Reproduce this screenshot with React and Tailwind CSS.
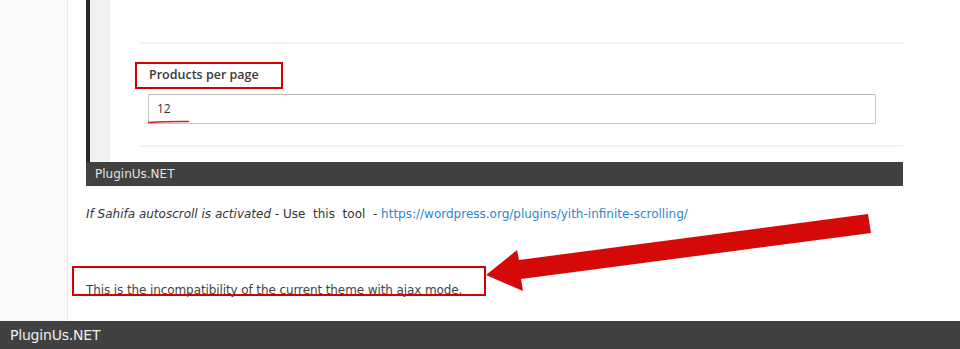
import React from 'react';

const body = { fontFamily: '"DejaVu Sans", Verdana, sans-serif' };

function Arrow() {
    return (
        <svg className="absolute left-0 top-0 pointer-events-none" width="960" height="349" viewBox="0 0 960 349">
            <polygon
                points="486,275 517,250 519,260 868,214 871,233 521,279 523,291"
                fill="#d60909"
            />
        </svg>
    );
}

function InnerShot() {
    return (
        <div className="ml-[18px] w-[817px] flex flex-col">
            <div className="flex h-[162px]">
                <div className="w-[4px] bg-[#23282d]" />
                <div className="w-[20px] bg-[#f1f1f1]" />
                <div className="flex-1 bg-white relative">
                    <div className="ml-[29px] mt-[42px] h-[2px] bg-[#f1f3f3]" />
                    <div className="ml-[25px] mt-[18px] w-[148px] h-[27px] border-2 border-[#d40000] flex items-center pl-[12px]">
                        <span className="text-[12.5px] font-semibold text-[#3a3a3a]" style={{ fontFamily: '"Open Sans", sans-serif' }}>
                            Products per page
                        </span>
                    </div>
                    <div className="relative ml-[38px] mt-[5px] w-[728px] h-[30px] rounded-[2px] border border-[#c4c4c4] border-t-[#b8b8b8] flex items-center pl-[8px]">
                        <span className="text-[12px] text-[#333]" style={{ fontFamily: '"Open Sans", sans-serif' }}>12</span>
                        <svg className="absolute left-[-2px] top-[25px]" width="44" height="4" viewBox="0 0 44 4">
                            <path d="M1 2.5 Q20 1.2 42 1.5" stroke="#d42020" strokeWidth="1.5" fill="none" />
                        </svg>
                    </div>
                    <div className="ml-[29px] mt-[21px] h-[2px] bg-[#f1f3f3]" />
                </div>
            </div>
            <div className="h-[24px] bg-[#414141] flex items-center pl-[9px]">
                <span className="text-[12px] text-[#e2e2e2]" style={body}>PluginUs.NET</span>
            </div>
        </div>
    );
}

export default function App() {
    return (
        <div className="relative w-[960px] h-[349px] overflow-hidden bg-white" style={body}>
            <div className="flex h-[321px]">
                <div className="w-[68px] bg-[#f9f9f9] border-r border-[#ececec]" />
                <div className="flex-1 flex flex-col">
                    <InnerShot />
                    <p className="ml-[18px] mt-[20px] text-[12px] leading-[16px] text-[#333]">
                        <em>If Sahifa autoscroll is activated</em> - Use&nbsp; this&nbsp; tool&nbsp; -{' '}
                        <a href="#" className="text-[#2a86d1]">https://wordpress.org/plugins/yith-infinite-scrolling/</a>
                    </p>
                    <div className="ml-[4px] mt-[44px] w-[414px] h-[30px] border-2 border-[#d40000] flex items-end">
                        <span className="ml-[12px] mb-[-4px] text-[12px] leading-[16px] text-[#444] tracking-[-0.1px]">
                            This is the incompatibility of the current theme with ajax mode.
                        </span>
                    </div>
                </div>
            </div>
            <div className="h-[28px] bg-[#414141] flex items-center pl-[10px]">
                <span className="text-[14px] tracking-[-0.2px] text-[#eeeeee]">PluginUs.NET</span>
            </div>
            <Arrow />
        </div>
    );
}
